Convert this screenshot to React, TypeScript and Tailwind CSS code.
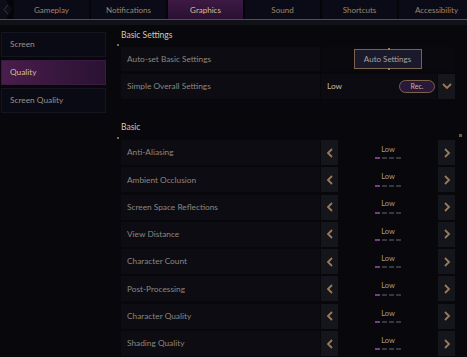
import React from "react";

const TABS = ["Gameplay", "Notifications", "Graphics", "Sound", "Shortcuts", "Accessibility"];
const SIDE = ["Screen", "Quality", "Screen Quality"];
const BASIC = [
  "Anti-Aliasing",
  "Ambient Occlusion",
  "Screen Space Reflections",
  "View Distance",
  "Character Count",
  "Post-Processing",
  "Character Quality",
  "Shading Quality",
];

function Chevron({ dir }: { dir: "left" | "right" | "down" }) {
  const d =
    dir === "left" ? "M7 2 L3 6 L7 10" : dir === "right" ? "M3 2 L7 6 L3 10" : "M1 3 L5 7 L9 3";
  return (
    <svg width="10" height="12" viewBox="0 0 10 12" className="block">
      <path d={d} fill="none" stroke="#9a7a58" strokeWidth="1.8" />
    </svg>
  );
}

function Level() {
  return (
    <div className="flex flex-col items-center gap-[4px]">
      <span className="text-[7.5px] leading-none text-[#a89a86]">Low</span>
      <div className="flex gap-[2px]">
        <span className="w-[5px] h-[2px] bg-[#7b3a86]" />
        <span className="w-[5px] h-[2px] bg-[#33393f]" />
        <span className="w-[5px] h-[2px] bg-[#33393f]" />
        <span className="w-[5px] h-[2px] bg-[#33393f]" />
      </div>
    </div>
  );
}

export default function App() {
  return (
    <div
      className="w-[467px] h-[357px] overflow-hidden bg-[#07070c] text-[8.3px]"
      style={{ fontFamily: "Lato, 'Open Sans', sans-serif" }}
    >
      {/* tab bar */}
      <div className="flex h-[19px] gap-[2px] bg-[#050509]">
        <div className="w-[12px] shrink-0 flex items-center justify-center">
          <svg width="12" height="19" viewBox="0 0 12 19">
            <path d="M0 0 L6 0 L12 9.5 L6 19 L0 19 Z" fill="#0d0d18" />
            <path d="M8 5 L4 9.5 L8 14" fill="none" stroke="#3a3444" strokeWidth="1" />
          </svg>
        </div>
        {TABS.map((t) => (
          <div
            key={t}
            className={`w-[75px] shrink-0 flex items-center justify-center text-[8px] ${
              t === "Graphics"
                ? "bg-gradient-to-b from-[#3d1a44] to-[#2a1032] text-[#d9bf95]"
                : "bg-[#0b0b18] text-[#9d876a]"
            }`}
          >
            {t}
          </div>
        ))}
      </div>
      <div className="h-px bg-[#5e4e3e]" />
      <div className="h-[5px] bg-[#111118]" />

      <div className="flex">
        {/* sidebar */}
        <div className="w-[106px] shrink-0 flex flex-col gap-[3px] pt-[7px] pl-px">
          {SIDE.map((s) => (
            <div
              key={s}
              className={`h-[25px] flex items-center pl-[8px] border ${
                s === "Quality"
                  ? "bg-gradient-to-r from-[#4a1d4c] to-[#2a1233] border-[#3a1a40] text-[#d9bf95]"
                  : "bg-[#0a0a14] border-[#15151f] text-[#9d8f80]"
              }`}
            >
              {s}
            </div>
          ))}
        </div>

        {/* main */}
        <div className="flex-1 pl-[15px] pt-[3px]">
          <div className="h-[15px] flex items-center text-[8.5px] text-[#d8c8ae]">Basic Settings</div>
          <div className="w-[2px] h-[2px] bg-[#7a6a58] -ml-[4px] mt-px" />
          <div className="flex flex-col gap-[3px] mt-px w-[334px]">
            <div className="flex h-[24px] gap-px">
              <div className="w-[199px] bg-[#0c0c12] flex items-center pl-[6px] text-[#8d8680]">
                Auto-set Basic Settings
              </div>
              <div className="flex-1 bg-[#09090e] flex items-center justify-center pr-[1px]">
                <div className="relative w-[68px] h-[20px] border border-[#7a624c] bg-[#1a1a2c] flex items-center justify-center text-[#a9a2a0] text-[8px]">
                  Auto Settings
                  <span className="absolute -top-[2px] left-[33px] w-[2px] h-[2px] bg-[#9a7a58]" />
                  <span className="absolute -bottom-[2px] left-[33px] w-[2px] h-[2px] bg-[#9a7a58]" />
                </div>
              </div>
            </div>
            <div className="flex h-[25px] gap-px">
              <div className="w-[199px] bg-[#0c0c12] flex items-center pl-[6px] text-[#8d8680]">
                Simple Overall Settings
              </div>
              <div className="w-[116px] bg-[#0b0b11] flex items-center justify-between pl-[6px] pr-[2px]">
                <span className="text-[#c8b8a0]">Low</span>
                <span className="h-[13px] w-[36px] rounded-full border border-[#7a624c] bg-[#2a1838] flex items-center justify-center text-[7px] text-[#c8b8a0]">
                  Rec.
                </span>
              </div>
              <div className="w-[17px] bg-[#16161d] flex items-center justify-center">
                <Chevron dir="down" />
              </div>
            </div>
          </div>

          <div className="h-[15px] flex items-center text-[8.5px] text-[#d8c8ae] mt-[21px]">Basic</div>
          <div className="w-[2px] h-[2px] bg-[#7a6a58] -ml-[4px] mt-[2px]" />
          <div className="flex flex-col gap-[2.3px] mt-px w-[334px]">
            {BASIC.map((b) => (
              <div key={b} className="flex h-[25px] gap-px">
                <div className="w-[199px] bg-[#0c0c12] flex items-center pl-[6px] text-[#8d8680]">{b}</div>
                <div className="w-[17px] bg-[#15151c] flex items-center justify-center">
                  <Chevron dir="left" />
                </div>
                <div className="w-[98px] flex items-center justify-center">
                  <Level />
                </div>
                <div className="w-[17px] bg-[#15151c] flex items-center justify-center">
                  <Chevron dir="right" />
                </div>
              </div>
            ))}
          </div>
        </div>
        <div className="absolute left-[459px] top-[134px] w-[3px] h-[3px] bg-[#6a5a48]" />
      </div>
    </div>
  );
}
